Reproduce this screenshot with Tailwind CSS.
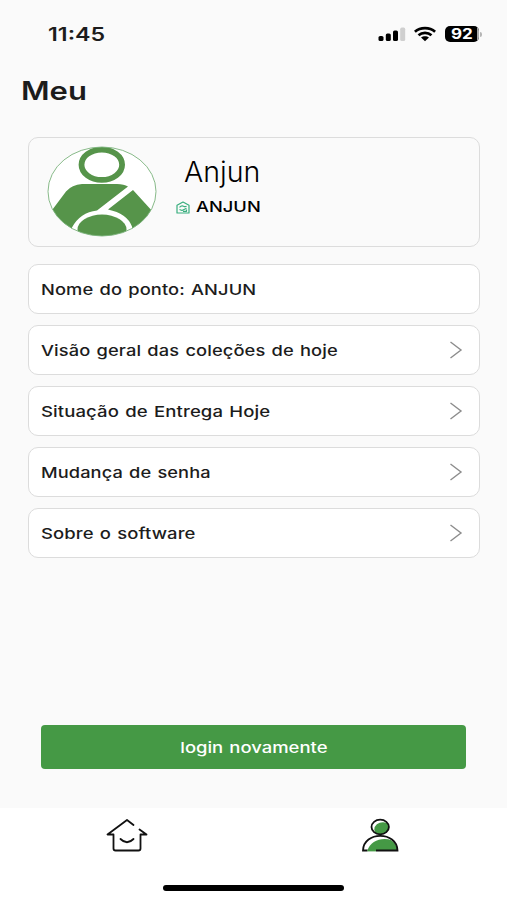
<!DOCTYPE html>

<html lang="pt">
    <head>
        <meta charset="utf-8">
        <title>Meu</title>
        <script src="https://cdn.jsdelivr.net/npm/@tailwindcss/browser@4"></script>
    </head>
    <body class="bg-[#fafafa]">
        <div class="w-[507px] h-[900px] overflow-hidden flex flex-col bg-[#fafafa] text-[#1c1c1c] font-['Inter',sans-serif]">
            <!--status bar-->
            <div class="h-[68px] flex-none flex items-center justify-between pl-[48px] pr-[25px]">
                <span class="inline-block origin-left scale-x-[1.29] text-[18px] font-semibold whitespace-nowrap">11:45</span>
                <div class="flex items-center">
                    <svg class="w-[28px] h-[16px]" viewBox="0 0 28 16">
                        <rect x="0.5" y="10" width="5" height="5" rx="1.6"/>
                        <rect x="7.8" y="7.4" width="5" height="7.6" rx="1.6"/>
                        <rect x="15" y="4.6" width="5" height="10.4" rx="1.6"/>
                        <rect x="22.2" y="1.6" width="5" height="13.4" rx="1.6" fill="#cfcfcf"/>
                    </svg>
                    <svg class="w-[24px] h-[16px] ml-[7px]" viewBox="0 0 24 16" fill="none" stroke="#000" stroke-width="2.7">
                        <path d="M1.9 5.7C7.4.8 16.6.8 22.1 5.7"/>
                        <path d="M5.5 9.2C9.2 6 14.8 6 18.5 9.2"/>
                        <path d="M8 11.6C10.3 9.8 13.7 9.8 16 11.6L12 15.3Z" fill="#000" stroke="none"/>
                    </svg>
                    <div class="relative w-[34px] h-[16px] ml-[8px] rounded-[5px] bg-black overflow-hidden flex items-center justify-center text-white">
                        <div class="absolute right-0 top-0 w-[2px] h-full bg-[#a8a8a8]"></div>
                        <span class="inline-block scale-x-[1.22] text-[14px] leading-none font-bold">92</span>
                    </div>
                    <div class="w-[2px] h-[5px] ml-[1px] rounded-r-full bg-[#b5b5b5]"></div>
                </div>
            </div>

            <h1 class="h-[69px] flex-none pl-[21px] pt-[5px] text-[25px] leading-[36px] font-semibold"><span class="inline-block origin-left scale-x-[1.24]">Meu</span></h1>

            <!--profile card-->
            <div class="mx-[27.5px] h-[110px] flex-none flex rounded-[10px] border border-[#dcdcdc] pl-[18px] pt-[8px]">
                <svg class="w-[110px] h-[91px] flex-none" viewBox="47 146.5 110 91">
                    <clipPath id="face"><ellipse cx="102" cy="192" rx="54" ry="44.5"/></clipPath>
                    <g clip-path="url(#face)">
                        <ellipse cx="102" cy="192" rx="54" ry="44.5" fill="#fff"/>
                        <path d="M48 216L66 192Q72 185 82 184.5L117 184.5Q124 184.5 128 187L97 211Q80 213 72 228L71 240H44Z" fill="#56944a"/>
                        <path d="M133 190.5L158 218L134 240L132 227Q127 214 108 210Z" fill="#56944a"/>
                        <ellipse cx="102" cy="230" rx="24.5" ry="15" fill="#56944a"/>
                        <ellipse cx="101.8" cy="165.2" rx="20.3" ry="15.2" fill="none" stroke="#56944a" stroke-width="5.8"/>
                    </g>
                    <ellipse cx="102" cy="192" rx="54" ry="44.5" fill="none" stroke="#7bb27c" stroke-width="0.9"/>
                </svg>
                <div class="ml-[19px] pt-[8px]">
                    <div class="pl-[8px] text-[28px] leading-[36px] text-black font-light"><span class="inline-block origin-left scale-x-[1.02]">Anjun</span></div>
                    <div class="flex items-center h-[34px]">
                        <svg class="w-[14px] h-[13px]" viewBox="0 0 14 13" fill="none" stroke="#38ae7e" stroke-width="1.2" stroke-linejoin="round">
                            <path d="M1 12V4.3L7 1L13 4.3V12Z"/>
                            <path d="M3.5 6.3Q5.5 4.3 7.500 5.300T10.500 5M3.500 8.500L6 9.500L10.500 7.300M7 10.300H10.500V8.500"/>
                        </svg>
                        <span class="inline-block origin-left scale-x-[1.22] ml-[6px] pt-[1px] text-[15px] text-black font-medium">ANJUN</span>
                    </div>
                </div>
            </div>

            <!--menu-->
            <div class="mx-[27.5px] mt-[17px] flex flex-col gap-[11px] text-[15px] font-medium whitespace-nowrap tracking-[0.08px] [word-spacing:1px]">
                <div class="h-[50px] flex items-center rounded-[10px] border border-[#dcdcdc] bg-white pl-[12.5px]">
                    <span class="inline-block origin-left scale-x-[1.22] pt-[2px]">Nome do ponto: ANJUN</span>
                </div>
                <div class="h-[50px] flex items-center justify-between rounded-[10px] border border-[#dcdcdc] bg-white pl-[12.5px] pr-[16px]">
                    <span class="inline-block origin-left scale-x-[1.22] pt-[2px]">Visão geral das coleções de hoje</span>
                    <svg class="w-[14px] h-[18px]" viewBox="0 0 14 18" fill="none" stroke="#8c8c8c" stroke-width="1.4"><path d="M1.5 1L12 9L1.5 17"/></svg>
                </div>
                <div class="h-[50px] flex items-center justify-between rounded-[10px] border border-[#dcdcdc] bg-white pl-[12.5px] pr-[16px]">
                    <span class="inline-block origin-left scale-x-[1.235] pt-[2px]">Situação de Entrega Hoje</span>
                    <svg class="w-[14px] h-[18px]" viewBox="0 0 14 18" fill="none" stroke="#8c8c8c" stroke-width="1.4"><path d="M1.5 1L12 9L1.5 17"/></svg>
                </div>
                <div class="h-[50px] flex items-center justify-between rounded-[10px] border border-[#dcdcdc] bg-white pl-[12.5px] pr-[16px]">
                    <span class="inline-block origin-left scale-x-[1.215] pt-[2px]">Mudança de senha</span>
                    <svg class="w-[14px] h-[18px]" viewBox="0 0 14 18" fill="none" stroke="#8c8c8c" stroke-width="1.4"><path d="M1.5 1L12 9L1.5 17"/></svg>
                </div>
                <div class="h-[50px] flex items-center justify-between rounded-[10px] border border-[#dcdcdc] bg-white pl-[12.5px] pr-[16px]">
                    <span class="inline-block origin-left scale-x-[1.23] pt-[2px]">Sobre o software</span>
                    <svg class="w-[14px] h-[18px]" viewBox="0 0 14 18" fill="none" stroke="#8c8c8c" stroke-width="1.4"><path d="M1.5 1L12 9L1.5 17"/></svg>
                </div>
            </div>

            <button class="mt-auto mb-[39px] mx-[41px] h-[44px] flex-none rounded-[4px] bg-[#459945] pt-[2px] text-white text-[15px] font-medium [word-spacing:1px]"><span class="inline-block scale-x-[1.23]">login novamente</span></button>

            <!--tab bar-->
            <div class="h-[92px] flex-none bg-white flex flex-col items-center">
                <div class="w-full h-[77px] grid grid-cols-2 justify-items-center pt-[10px]">
                    <svg class="w-[42px] h-[36px]" viewBox="0 0 42 36" fill="none" stroke="#111" stroke-width="1.8" stroke-linecap="round" stroke-linejoin="round">
                        <path d="M27.5 7L21 2L1.5 16.500H7.500V30.500Q7.500 32.500 9.500 32.500H32.500Q34.500 32.500 34.500 30.500V16.500H40.500L33.500 11.500"/>
                        <path d="M14.5 21Q21 27.500 27.500 21"/>
                    </svg>
                    <svg class="w-[38px] h-[36px]" viewBox="0 0 38 36" fill="none" stroke="#111" stroke-width="1.8">
                        <clipPath id="head"><ellipse cx="19.2" cy="9" rx="8.7" ry="7.3"/></clipPath>
                        <clipPath id="torso"><path d="M2 32.5C4 14.500 34.500 14.500 36.500 32.500Z"/></clipPath>
                        <ellipse cx="22" cy="11.5" rx="8.7" ry="7.3" fill="#459945" stroke="none" clip-path="url(#head)"/>
                        <ellipse cx="19.2" cy="9" rx="8.7" ry="7.3"/>
                        <path d="M6 34C9 20 27 17 38 26V34Z" fill="#459945" stroke="none" clip-path="url(#torso)"/>
                        <path d="M6.5 32.5H2C2.500 13 36 13 36.500 32.500H15"/>
                        <path d="M6.5 32.5H15" stroke="#459945"/>
                    </svg>
                </div>
                <div class="w-[181px] h-[6px] rounded-full bg-black"></div>
            </div>
        </div>
    </body>
</html>
